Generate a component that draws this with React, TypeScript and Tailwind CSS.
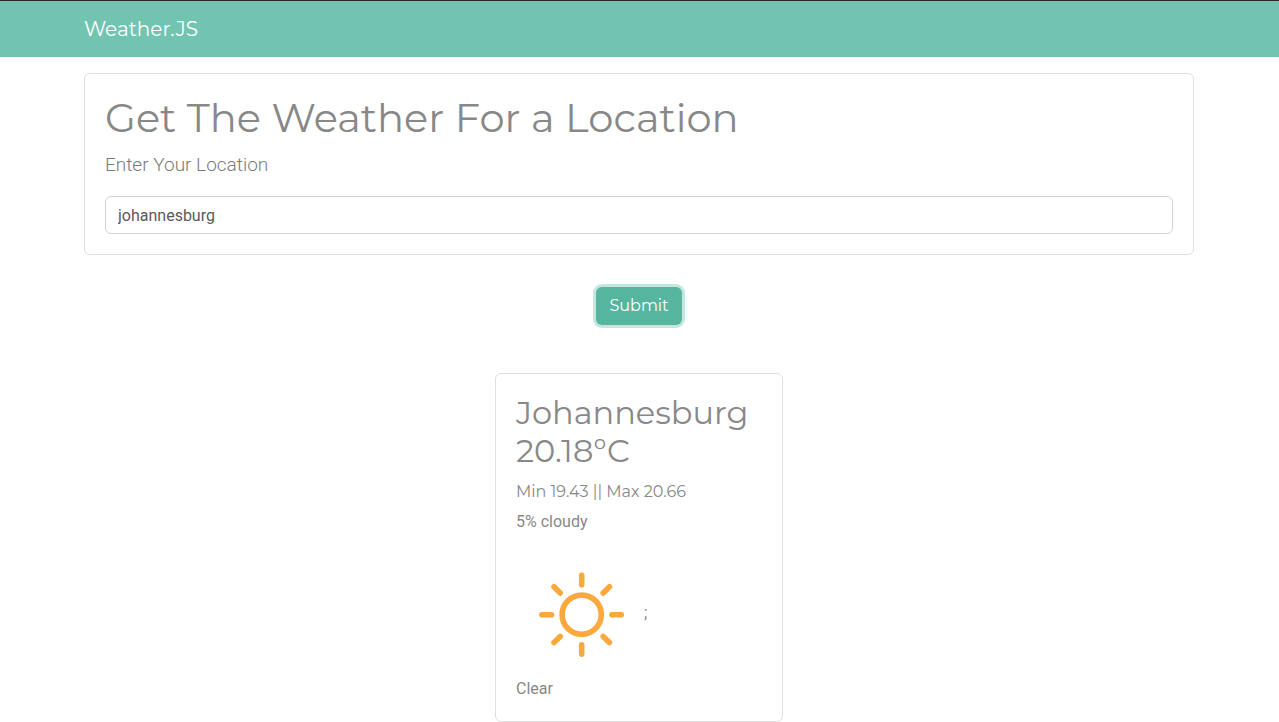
import { useState } from 'react';
import type { FormEvent } from 'react';

const weather = {
  city: 'Johannesburg',
  temperature: '20.18°C',
  range: 'Min 19.43 || Max 20.66',
  clouds: '5% cloudy',
  condition: 'Clear',
};

function SunIcon() {
  return (
    <svg
      className="size-32 shrink-0"
      viewBox="0 0 128 128"
      fill="none"
      stroke="#fba83c"
      strokeWidth="5.6"
      strokeLinecap="round"
      role="img"
      aria-label={weather.condition}
    >
      <circle cx="65.7" cy="65.7" r="19.6" />
      <path d="M65.7 26.3v9.4M65.7 95.7v9.4M25.9 65.7h9.6M95.9 65.7h9.4M38 37.8l6.2 6.2M93.4 37.8l-6.2 6.2M38 93.6l6.2-6.2M93.4 93.6l-6.2-6.2" />
    </svg>
  );
}

export default function App() {
  const [location, setLocation] = useState('johannesburg');
  const handleSubmit = (event: FormEvent) => event.preventDefault();

  return (
    <div className="bg-white font-['Roboto',sans-serif] text-base text-[#888888]">
      <header className="border-t border-[#2b2b2b] bg-[#72c4b1]">
        <nav className="mx-auto flex h-14 max-w-[1141px] items-center pr-4 pl-[15px]">
          <a href="#" className="font-['Montserrat',sans-serif] text-xl leading-8 text-white">
            Weather.JS
          </a>
        </nav>
      </header>
      <main className="mx-auto mt-4 flex max-w-[1141px] flex-col items-center pr-4 pl-[15px]">
        <form onSubmit={handleSubmit} className="flex w-full flex-col items-center">
          <section className="w-full rounded-md border border-[#dfdfdf] p-5">
            <h1 className="mb-2 font-['Montserrat',sans-serif] text-[40px] leading-[48px]">
              Get The Weather For a Location
            </h1>
            <label htmlFor="location" className="mb-4 block text-[19px] leading-[30px] font-light text-[#7a7a7a]">
              Enter Your Location
            </label>
            <input
              id="location"
              type="text"
              value={location}
              onChange={(event) => setLocation(event.target.value)}
              className="block h-[38px] w-full rounded-md border border-[#ced4da] px-3 text-[#5a5a5a] outline-none"
            />
          </section>
          <button
            type="submit"
            className="mt-8 h-[38px] cursor-pointer rounded-md bg-[#55b59f] px-[13px] font-['Montserrat',sans-serif] text-base leading-6 text-white ring-3 ring-[#c3e6de]"
          >
            Submit
          </button>
        </form>
        <section className="mt-12 w-72 rounded-md border border-[#dfdfdf] p-5">
          <h2 className="mb-2.5 font-['Montserrat',sans-serif] text-[32px] leading-[38px]">
            {weather.city}
            <br />
            {weather.temperature}
          </h2>
          <p className="mb-1.5 font-['Montserrat',sans-serif] text-base leading-6">{weather.range}</p>
          <p className="mb-[15px] leading-6">{weather.clouds}</p>
          <div className="flex items-center">
            <SunIcon />
            <span>;</span>
          </div>
          <p className="leading-6">{weather.condition}</p>
        </section>
      </main>
    </div>
  );
}
